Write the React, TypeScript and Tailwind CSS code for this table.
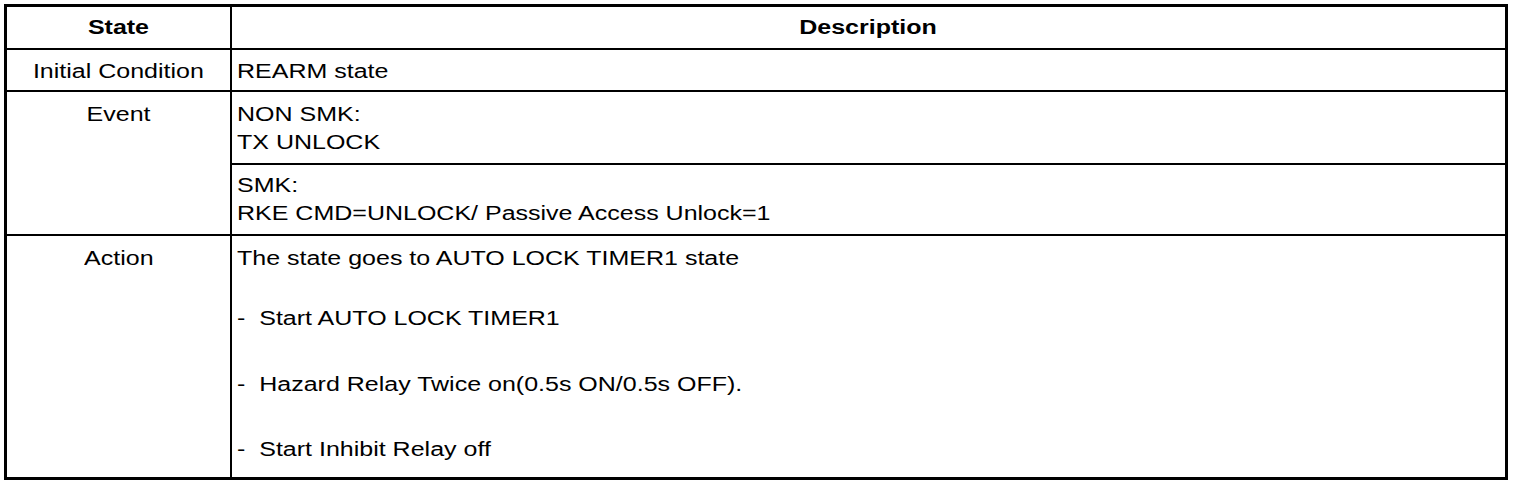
const FONT = "font-['Liberation_Sans',Arial,sans-serif]";

function Txt({ children, center }: { children: React.ReactNode; center?: boolean }) {
  return (
    <span
      className={`inline-block whitespace-pre scale-x-[1.25] ${center ? 'origin-center' : 'origin-left'}`}
    >
      {children}
    </span>
  );
}

function Line({ children, center }: { children: React.ReactNode; center?: boolean }) {
  return (
    <div className={`h-[28px] leading-[28px] ${center ? 'text-center' : ''}`}>
      <Txt center={center}>{children}</Txt>
    </div>
  );
}

export default function App() {
  return (
    <div className={`min-h-screen bg-white pl-[4px] pt-[4px] text-[20px] text-black ${FONT}`}>
      <div className="flex h-[476px] w-[1504px] flex-col border-[3px] border-black">
        {/* header */}
        <div className="flex h-[43px] border-b-2 border-black font-bold">
          <div className="w-[225px] border-r-2 border-black pt-[6px]">
            <Line center>State</Line>
          </div>
          <div className="flex-1 pt-[6px]">
            <Line center>Description</Line>
          </div>
        </div>

        {/* initial condition */}
        <div className="flex h-[42px] border-b-2 border-black">
          <div className="w-[225px] border-r-2 border-black pt-[7px]">
            <Line center>Initial Condition</Line>
          </div>
          <div className="flex-1 pl-[5px] pt-[7px]">
            <Line>REARM state</Line>
          </div>
        </div>

        {/* event */}
        <div className="flex h-[144px] border-b-2 border-black">
          <div className="w-[225px] border-r-2 border-black pt-[8px]">
            <Line center>Event</Line>
          </div>
          <div className="flex flex-1 flex-col">
            <div className="h-[73px] border-b-2 border-black pl-[5px] pt-[8px]">
              <Line>NON SMK:</Line>
              <Line>TX UNLOCK</Line>
            </div>
            <div className="flex-1 pl-[5px] pt-[6px]">
              <Line>SMK:</Line>
              <Line>RKE CMD=UNLOCK/ Passive Access Unlock=1</Line>
            </div>
          </div>
        </div>

        {/* action */}
        <div className="flex flex-1">
          <div className="w-[225px] border-r-2 border-black pt-[8px]">
            <Line center>Action</Line>
          </div>
          <div className="flex flex-1 flex-col pl-[5px] pt-[8px]">
            <Line>The state goes to AUTO LOCK TIMER1 state</Line>
            <div className="mt-[32px]">
              <Line>-  Start AUTO LOCK TIMER1</Line>
            </div>
            <div className="mt-[38px]">
              <Line>-  Hazard Relay Twice on(0.5s ON/0.5s OFF).</Line>
            </div>
            <div className="mt-[37px]">
              <Line>-  Start Inhibit Relay off</Line>
            </div>
          </div>
        </div>
      </div>
    </div>
  );
}
